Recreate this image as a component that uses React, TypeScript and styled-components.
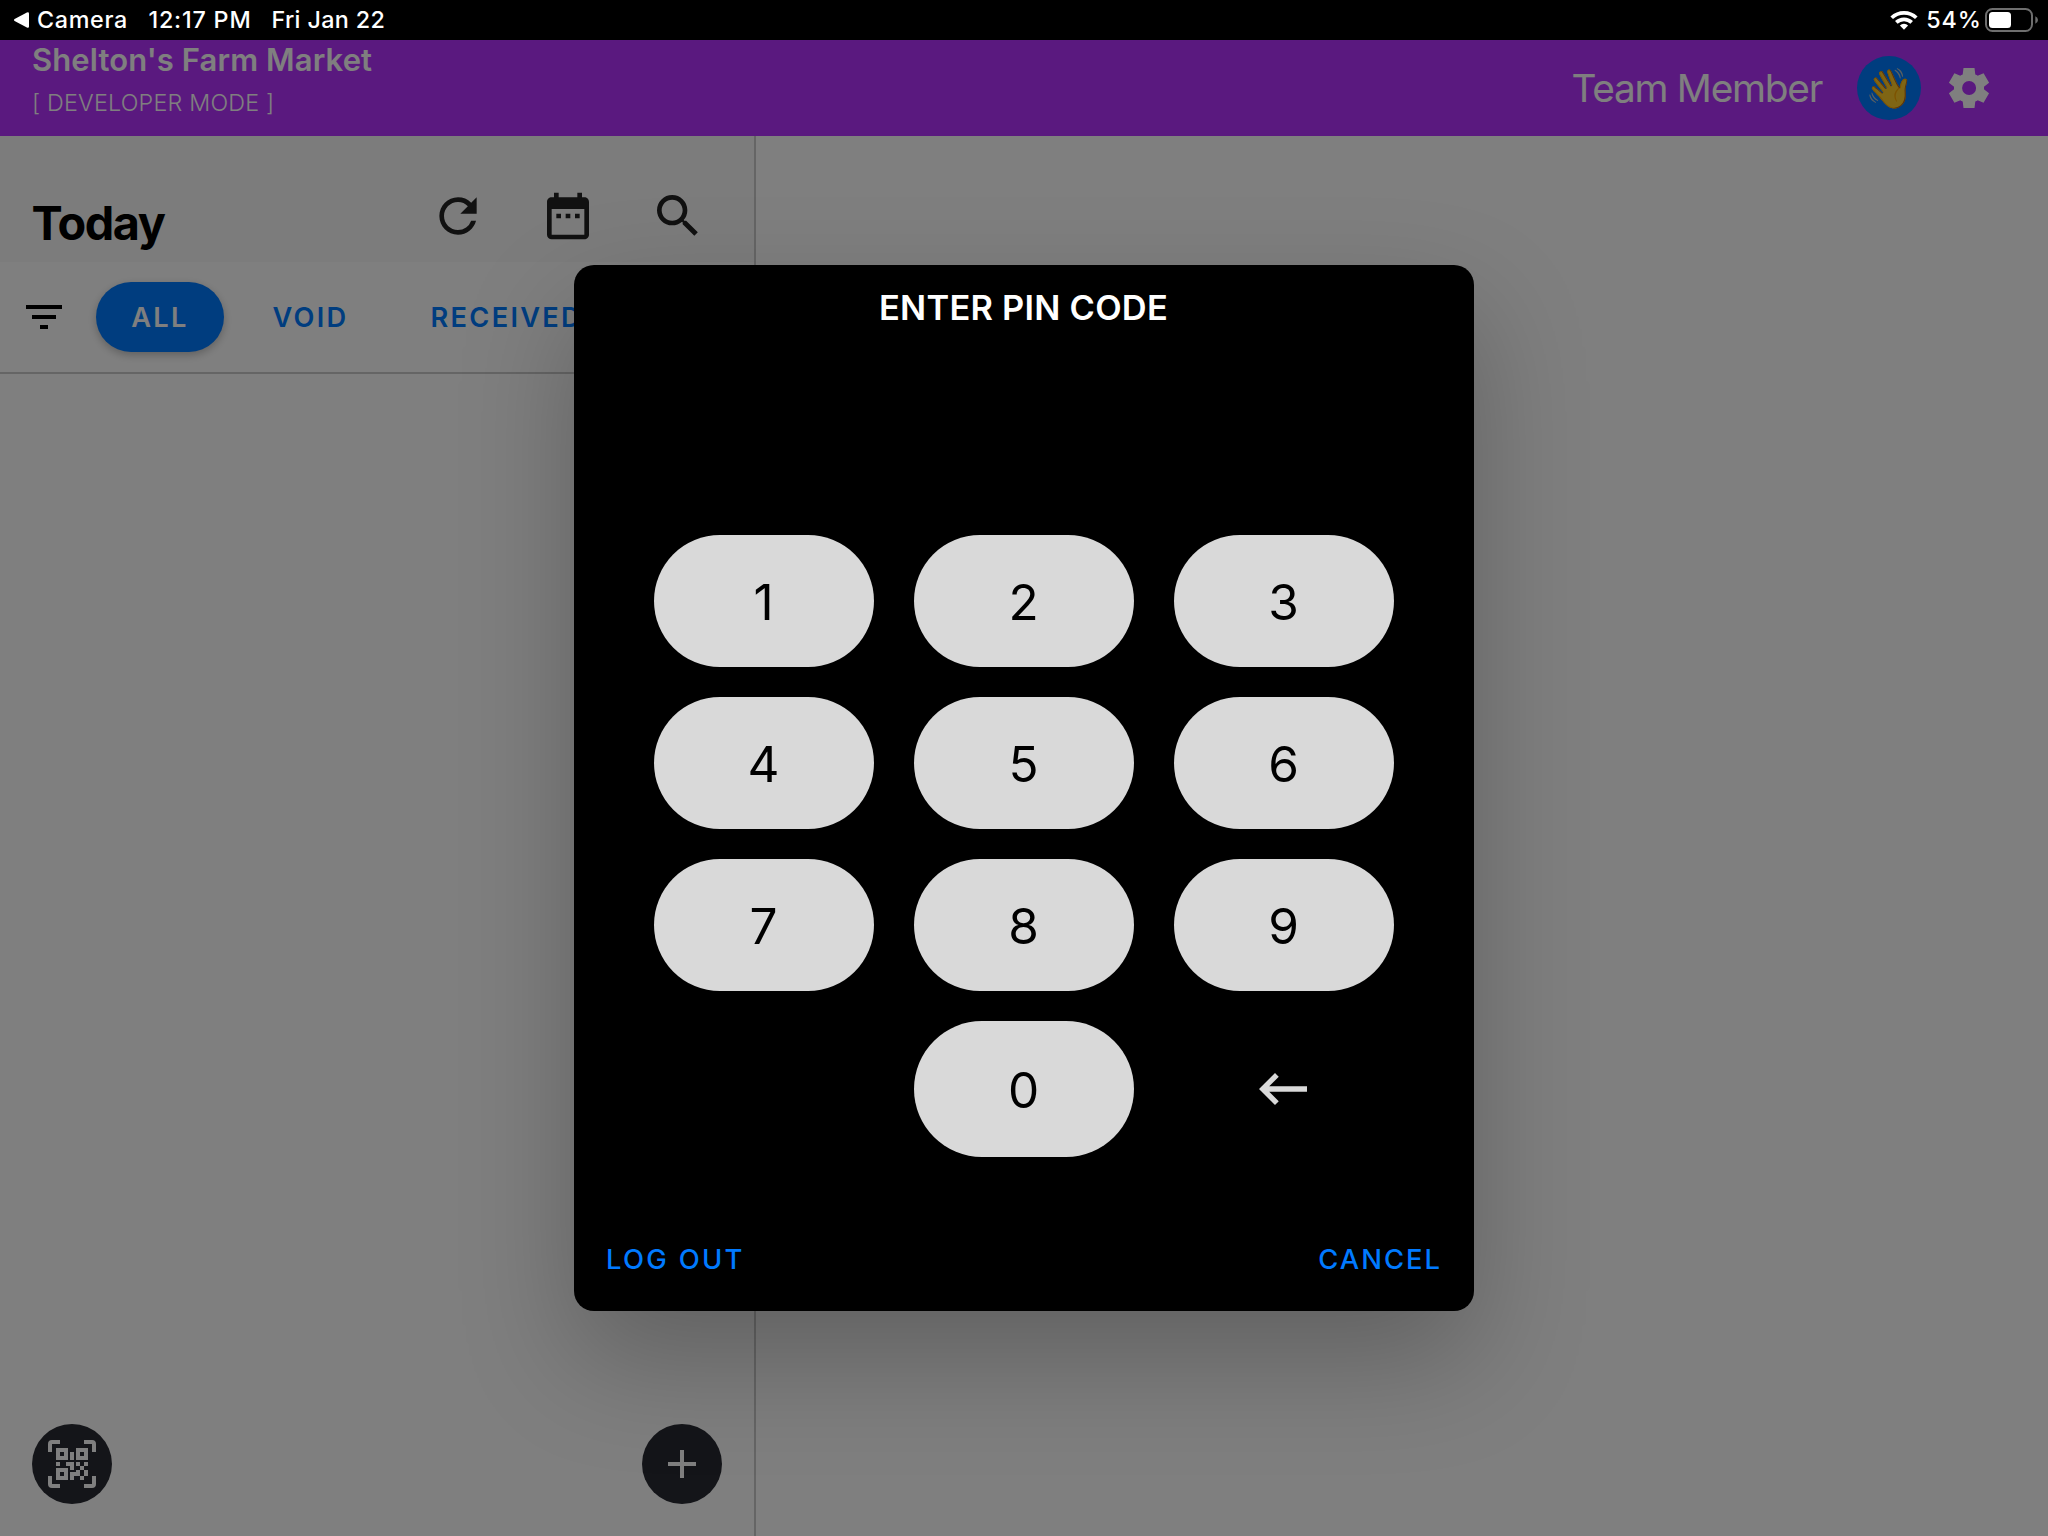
import React from "react";
import styled, { createGlobalStyle } from "styled-components";
import {
  MdAdd,
  MdDateRange,
  MdFilterList,
  MdKeyboardBackspace,
  MdRefresh,
  MdSearch,
} from "react-icons/md";

const GlobalStyle = createGlobalStyle`
  *, *::before, *::after { box-sizing: border-box; }
  body { margin: 0; background: #000; }
  button { border: 0; padding: 0; background: none; color: inherit; font-family: inherit; }
  svg { display: block; flex: none; }
`;

const Screen = styled.div`
  position: relative;
  display: flex;
  flex-direction: column;
  width: 2048px;
  height: 1536px;
  overflow: hidden;
  background: #fff;
  font-family: Inter, "Liberation Sans", sans-serif;
  color: #000;
`;

/* Status bar */

const StatusBar = styled.div`
  display: flex;
  align-items: center;
  justify-content: space-between;
  flex: none;
  height: 40px;
  padding: 0 10px 1px 14px;
  background: #000;
  color: #fff;
  font-size: 23.3px;
  font-weight: 500;
`;

const StatusGroup = styled.div`
  display: flex;
  align-items: center;
  white-space: nowrap;
`;

const StatusText = styled.span<{ $spacing: number; $before: number }>`
  margin-left: ${(p) => p.$before}px;
  letter-spacing: ${(p) => p.$spacing}px;
`;

const BatterySlot = styled.div`
  margin-left: 3px;
`;

/* App header */

const AppHeader = styled.header`
  display: flex;
  justify-content: space-between;
  flex: none;
  height: 96px;
  padding: 0 55px 0 32px;
  background: #b432fe;
  color: #fff;
`;

const StoreName = styled.div`
  font-size: 31px;
  font-weight: 600;
  line-height: 40px;
  letter-spacing: 0.1px;
`;

const ModeLabel = styled.div`
  font-size: 23.3px;
  font-weight: 300;
  line-height: 45px;
  letter-spacing: 0.2px;
`;

const Account = styled.div`
  display: flex;
  align-items: center;
`;

const RoleName = styled.span`
  margin: 0 35px 1px 0;
  font-size: 38.8px;
  font-weight: 400;
  letter-spacing: -1.25px;
`;

const Avatar = styled.div`
  display: flex;
  align-items: center;
  justify-content: center;
  width: 64px;
  height: 64px;
  margin-right: 24px;
  border-radius: 50%;
  background: #007aff;
  font-size: 39px;
  line-height: 64px;
`;

/* Split body */

const Body = styled.div`
  display: flex;
  flex: 1;
  min-height: 0;
`;

const ListPane = styled.section`
  position: relative;
  width: 756px;
  border-right: 2px solid #cacaca;
`;

const DetailPane = styled.section`
  flex: 1;
`;

const ListHeader = styled.div`
  display: flex;
  align-items: flex-start;
  justify-content: space-between;
  height: 126px;
  padding: 52px 48px 0 31.5px;
  background: #f8f8f8;
`;

const ListTitle = styled.h1`
  margin: 7px 0 0;
  font-size: 46.8px;
  font-weight: 700;
  line-height: 56px;
  letter-spacing: -1.5px;
`;

const HeaderTools = styled.div`
  display: flex;
  gap: 54px;
  color: #222;
`;

const FilterBar = styled.div`
  display: flex;
  align-items: center;
  height: 112px;
  padding-left: 20px;
  overflow: hidden;
  border-bottom: 2px solid #cacaca;
`;

const FilterTabs = styled.div`
  display: flex;
  gap: 15px;
  margin-left: 28px;
`;

const FilterTab = styled.button<{ $active?: boolean }>`
  flex: none;
  min-width: 128px;
  height: 70px;
  padding: 0 33.5px;
  border-radius: 35px;
  background: ${(p) => (p.$active ? "#007aff" : "transparent")};
  color: ${(p) => (p.$active ? "#fff" : "#007aff")};
  box-shadow: ${(p) => (p.$active ? "0 3px 8px rgba(0, 0, 0, 0.25)" : "none")};
  font-size: 27.2px;
  font-weight: 600;
  letter-spacing: 2.3px;
`;

const Fab = styled.button<{ $side: "left" | "right" }>`
  position: absolute;
  bottom: 32px;
  ${(p) => p.$side}: 32px;
  display: flex;
  align-items: center;
  justify-content: center;
  width: 80px;
  height: 80px;
  border-radius: 50%;
  background: #282a32;
  color: #fff;
`;

/* Pin dialog */

const Backdrop = styled.div`
  position: absolute;
  inset: 40px 0 0;
  display: flex;
  align-items: center;
  justify-content: center;
  background: rgba(0, 0, 0, 0.5);
`;

const Dialog = styled.div`
  display: flex;
  flex-direction: column;
  width: 900px;
  height: 1046px;
  border-radius: 20px;
  background: #000;
  color: #fff;
  box-shadow: 0 48px 116px rgba(0, 0, 0, 0.24);
`;

const DialogTitle = styled.h2`
  margin: 0;
  padding: 1px 1px 0 0;
  font-size: 34.4px;
  font-weight: 600;
  line-height: 84px;
  letter-spacing: 0.25px;
  text-align: center;
`;

const PinDisplay = styled.div`
  height: 185px;
`;

const Keypad = styled.div`
  display: grid;
  grid-template-columns: repeat(3, 220px);
  grid-template-rows: repeat(3, 132px) 136px;
  gap: 30px 40px;
  justify-content: center;
`;

const Key = styled.button`
  padding: 1px 1px 0 0;
  border-radius: 68px;
  background: #d9d9d9;
  color: #000;
  font-size: 49.5px;
  font-weight: 400;
`;

const BackspaceKey = styled.button`
  display: flex;
  grid-column: 3;
  align-items: center;
  justify-content: center;
  padding-right: 2px;
  color: #d9d9d9;
`;

const ZeroKey = styled(Key)`
  grid-column: 2;
`;

const DialogActions = styled.div`
  display: flex;
  align-items: center;
  justify-content: space-between;
  height: 104px;
  margin-top: auto;
  padding: 0 32px;
`;

const ActionButton = styled.button<{ $spacing: number }>`
  color: #007aff;
  font-size: 27.4px;
  font-weight: 500;
  letter-spacing: ${(p) => p.$spacing}px;
`;

/* Icons */

const BackTriangle = () => (
  <svg width="15" height="16" viewBox="0 0 15 16" fill="#fff">
    <path d="M0.600 7.100 12.900 0.500Q14.900 -.3 15 1.500V14.500Q14.900 16.300 12.900 15.500L0.600 8.900Q-.6 8 .6 7.100Z" />
  </svg>
);

const WifiIcon = () => (
  <svg width="28" height="20" viewBox="0 0 28 20" fill="none" stroke="#fff" strokeWidth="3.7">
    <path d="M1.700 7.800A17.600 17.600 0 0 1 26.300 7.800" />
    <path d="M6.300 12.400A11.100 11.100 0 0 1 21.700 12.400" />
    <path d="M14 19.700 9.900 15.500A5.800 5.800 0 0 1 18.100 15.500Z" fill="#fff" stroke="none" />
  </svg>
);

const BatteryIcon = () => (
  <svg width="53" height="24" viewBox="0 0 53 24">
    <rect x="1" y="1" width="46" height="22" rx="6.500" fill="none" stroke="#6e6e6e" strokeWidth="2" />
    <rect x="4" y="4" width="22" height="16" rx="3.500" fill="#fff" />
    <path d="M50.300 8.300Q53 9.300 53 12T50.300 15.700Z" fill="#6e6e6e" />
  </svg>
);

const GearIcon = () => (
  <svg width="48" height="48" viewBox="0 -960 960 960" fill="#fff">
    <path d="m370-80-16-128q-13-5-24.500-12T307-235l-119 50L78-375l103-78q-1-7-1-13.500v-27q0-6.500 1-13.500L78-585l110-190 119 50q11-8 23-15t24-12l16-128h220l16 128q13 5 24.500 12t22.500 15l119-50 110 190-103 78q1 7 1 13.500v27q0 6.500-2 13.500l103 78-110 190-118-50q-11 8-23 15t-24 12L590-80H370Zm112-260q58 0 99-41t41-99q0-58-41-99t-99-41q-59 0-99.500 41T342-480q0 58 40.500 99t99.500 41Z" />
  </svg>
);

const QrScanIcon = () => (
  <svg width="48" height="48" viewBox="0 0 24 24" fill="#fff">
    <path d="M4,4H10V10H4V4M20,4V10H14V4H20M14,15H16V13H14V11H16V13H18V11H20V13H18V15H20V18H18V20H16V18H13V20H11V16H14V15M16,15V18H18V15H16M4,20V14H10V20H4M6,6V8H8V6H6M16,6V8H18V6H16M6,16V18H8V16H6M4,11H6V13H4V11M9,11H13V15H11V13H9V11M11,6H13V10H11V6M2,2V6H0V2A2,2 0 0,1 2,0H6V2H2M22,0A2,2 0 0,1 24,2V6H22V2H18V0H22M2,18V22H6V24H2A2,2 0 0,1 0,22V18H2M22,22V18H24V22A2,2 0 0,1 22,24H18V22H22Z" />
  </svg>
);

const digits = ["1", "2", "3", "4", "5", "6", "7", "8", "9"];

export default function App() {
  return (
    <Screen>
      <GlobalStyle />
      <StatusBar>
        <StatusGroup>
          <BackTriangle />
          <StatusText $before={8} $spacing={0.68}>Camera</StatusText>
          <StatusText $before={20.5} $spacing={0.82}>12:17 PM</StatusText>
          <StatusText $before={20} $spacing={0.36}>Fri Jan 22</StatusText>
        </StatusGroup>
        <StatusGroup>
          <WifiIcon />
          <StatusText $before={8} $spacing={1}>54%</StatusText>
          <BatterySlot>
            <BatteryIcon />
          </BatterySlot>
        </StatusGroup>
      </StatusBar>

      <AppHeader>
        <div>
          <StoreName>Shelton's Farm Market</StoreName>
          <ModeLabel>[ DEVELOPER MODE ]</ModeLabel>
        </div>
        <Account>
          <RoleName>Team Member</RoleName>
          <Avatar>👋</Avatar>
          <GearIcon />
        </Account>
      </AppHeader>

      <Body>
        <ListPane>
          <ListHeader>
            <ListTitle>Today</ListTitle>
            <HeaderTools>
              <MdRefresh size={56} />
              <MdDateRange size={56} />
              <MdSearch size={56} />
            </HeaderTools>
          </ListHeader>
          <FilterBar>
            <MdFilterList size={48} />
            <FilterTabs>
              <FilterTab $active>ALL</FilterTab>
              <FilterTab>VOID</FilterTab>
              <FilterTab>RECEIVED</FilterTab>
            </FilterTabs>
          </FilterBar>
          <Fab $side="left">
            <QrScanIcon />
          </Fab>
          <Fab $side="right">
            <MdAdd size={48} />
          </Fab>
        </ListPane>
        <DetailPane />
      </Body>

      <Backdrop>
        <Dialog role="dialog">
          <DialogTitle>ENTER PIN CODE</DialogTitle>
          <PinDisplay />
          <Keypad>
            {digits.map((d) => (
              <Key key={d}>{d}</Key>
            ))}
            <ZeroKey>0</ZeroKey>
            <BackspaceKey>
              <MdKeyboardBackspace size={64} />
            </BackspaceKey>
          </Keypad>
          <DialogActions>
            <ActionButton $spacing={2.3}>LOG OUT</ActionButton>
            <ActionButton $spacing={2}>CANCEL</ActionButton>
          </DialogActions>
        </Dialog>
      </Backdrop>
    </Screen>
  );
}
